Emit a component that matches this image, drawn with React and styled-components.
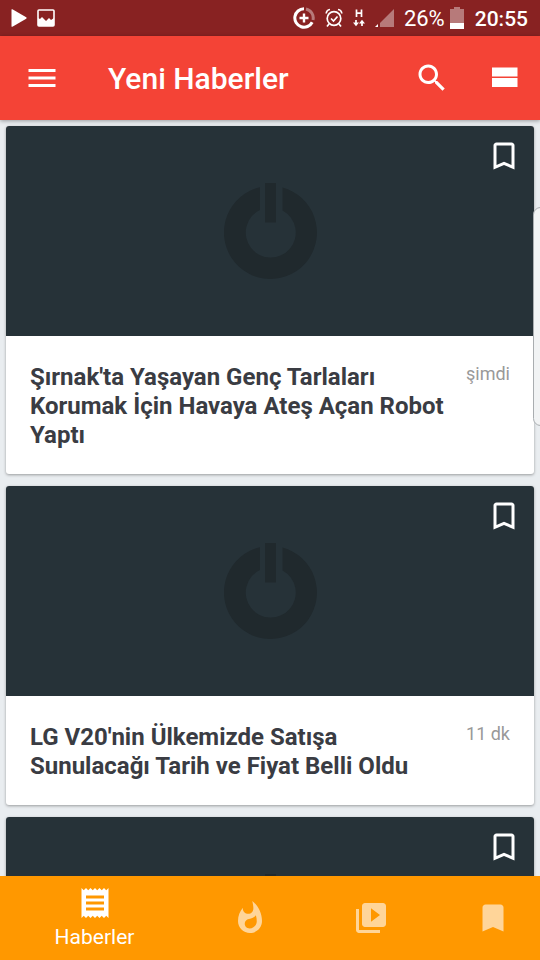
import React from "react";
import styled, { createGlobalStyle } from "styled-components";

const GlobalStyle = createGlobalStyle`
  * {
    box-sizing: border-box;
  }
  body {
    margin: 0;
    background: #e9edf0;
    font-family: Roboto, "Noto Sans", sans-serif;
  }
  button {
    padding: 0;
    border: 0;
    background: none;
    color: inherit;
    font: inherit;
    cursor: pointer;
  }
`;

const icons = {
  menu: "M3 18h18v-2H3v2zm0-5h18v-2H3v2zm0-7v2h18V6H3z",
  search:
    "M15.5 14h-.79l-.28-.27C15.41 12.59 16 11.11 16 9.5 16 5.91 13.09 3 9.5 3S3 5.91 3 9.5 5.91 16 9.5 16c1.61 0 3.09-.59 4.23-1.57l.27.28v.79l5 4.99L20.49 19l-4.99-5zm-6 0C7.01 14 5 11.99 5 9.5S7.01 5 9.5 5 14 7.01 14 9.5 11.99 14 9.5 14z",
  stream: "M4 18h17v-6H4v6zM4 5v6h17V5H4z",
  bookmarkBorder:
    "M17 3H7c-1.1 0-1.99.9-1.99 2L5 21l7-3 7 3V5c0-1.1-.9-2-2-2zm0 15l-5-2.18L7 18V5h10v13z",
  bookmark: "M17 3H7c-1.1 0-1.99.9-1.99 2L5 21l7-3 7 3V5c0-1.1-.9-2-2-2z",
  receipt:
    "M18 17H6v-2h12v2zm0-4H6v-2h12v2zm0-4H6V7h12v2zM3 22l1.5-1.5L6 22l1.5-1.5L9 22l1.5-1.5L12 22l1.5-1.5L15 22l1.5-1.5L18 22l1.5-1.5L21 22V2l-1.5 1.5L18 2l-1.5 1.5L15 2l-1.5 1.5L12 2l-1.5 1.5L9 2 7.5 3.5 6 2 4.5 3.5 3 2v20z",
  hot: "M13.5.67s.74 2.65.74 4.8c0 2.06-1.35 3.73-3.41 3.73-2.07 0-3.63-1.67-3.63-3.73l.03-.36C5.21 7.51 4 10.62 4 14c0 4.42 3.58 8 8 8s8-3.58 8-8C20 8.61 17.41 3.8 13.5.67zM11.71 19c-1.78 0-3.22-1.4-3.22-3.14 0-1.62 1.05-2.76 2.81-3.12 1.77-.36 3.6-1.21 4.62-2.58.39 1.29.59 2.65.59 4.04 0 2.65-2.15 4.8-4.8 4.8z",
  videos:
    "M4 6H2v14c0 1.1.9 2 2 2h14v-2H4V6zm16-4H8c-1.1 0-2 .9-2 2v12c0 1.1.9 2 2 2h12c1.1 0 2-.9 2-2V4c0-1.1-.9-2-2-2zm-8 12.5v-9l6 4.5-6 4.5z",
};

const news = [
  {
    id: 1,
    title: "Şırnak'ta Yaşayan Genç Tarlaları Korumak İçin Havaya Ateş Açan Robot Yaptı",
    time: "şimdi",
  },
  {
    id: 2,
    title: "LG V20'nin Ülkemizde Satışa Sunulacağı Tarih ve Fiyat Belli Oldu",
    time: "11 dk",
  },
  { id: 3 },
];

const tabs = [
  { icon: "receipt", name: "Haberler", active: true },
  { icon: "hot", name: "Popüler" },
  { icon: "videos", name: "Videolar" },
  { icon: "bookmark", name: "Kaydedilenler" },
];

const Icon = ({ name }) => (
  <IconSvg viewBox="0 0 24 24" aria-hidden="true">
    <path d={icons[name]} />
  </IconSvg>
);

const StatusBar = () => (
  <StatusWrapper>
    <StatusGroup $gap={10}>
      <svg width="16" height="18" viewBox="0 0 16 18" fill="#fff">
        <path d="M.5.8v16.4q0 1 .9.5l13.8-8q.8-.7 0-1.4L1.4.3Q.5-.2.5.8z" />
      </svg>
      <svg width="18" height="18" viewBox="0 0 18 18">
        <rect x="1" y="1" width="16" height="16" rx="1" fill="none" stroke="#fff" strokeWidth="1.6" />
        <path d="M1 9l2 1 2-2 3 3 1 1 3-3 2 2 3-2v8H1z" fill="#fff" />
      </svg>
    </StatusGroup>
    <StatusGroup $gap={10}>
      <svg width="22" height="22" viewBox="0 0 22 22" fill="none" stroke="#fff">
        <path d="M11 1.8A9.2 9.2 0 1 0 19.2 15.2" strokeWidth="3" />
        <path d="M13 2A9.2 9.2 0 0 1 20 13" strokeWidth="3" opacity=".4" />
        <path d="M11 6.5v9M6.5 11h9" strokeWidth="2.4" />
      </svg>
      <svg width="18" height="20" viewBox="0 0 18 20" fill="none" stroke="#fff" strokeWidth="1.7">
        <circle cx="9" cy="10.5" r="6.8" />
        <path d="M1.2 5.5Q1.5 2 5 1.5M16.8 5.5Q16.5 2 13 1.5M4 16l-2 2.5M14 16l2 2.5M6 10.5l2.5 2.5 4-4.5" />
      </svg>
      <svg width="12" height="20" viewBox="0 0 12 20" fill="none" stroke="#fff" strokeWidth="1.7">
        <path d="M3.5 1.500v7.500M8.500 1.500v7.500M3.500 5.200h5M3 12v4M9 18v-4" />
        <path d="M0 14.500h6L3 18.300zM6 15.500h6L9 11.700z" fill="#fff" stroke="none" />
      </svg>
      <svg width="19" height="20" viewBox="0 0 19 20" fill="#fff">
        <path d="M19 1v18H5v-4z" opacity=".4" />
        <path d="M3 16v3H0z" />
      </svg>
      <StatusGroup $gap={5}>
        <StatusText>26%</StatusText>
        <svg width="15" height="22" viewBox="0 0 15 22" fill="#fff">
          <path d="M4 0h6v2h4v14H0V2h4z" opacity=".4" />
          <path d="M0 16h14v6H0z" />
        </svg>
      </StatusGroup>
      <StatusText $bold>20:55</StatusText>
    </StatusGroup>
  </StatusWrapper>
);

const NewsCard = ({ title, time }) => (
  <Card>
    <Cover>
      <svg width="93" height="96" viewBox="0 0 93 96" fill="#20292d" aria-hidden="true">
        <path d="M36 4.2A46.5 46.5 0 1 0 58.5 4.6V27.500A25 25 0 1 1 36 27z" />
        <path d="M41 0h11v39.500H41z" />
      </svg>
      <SaveButton aria-label="Kaydet">
        <Icon name="bookmarkBorder" />
      </SaveButton>
    </Cover>
    {title && (
      <CardBody>
        <CardTitle>{title}</CardTitle>
        <Time>{time}</Time>
      </CardBody>
    )}
  </Card>
);

export default function App() {
  return (
    <Screen>
      <GlobalStyle />
      <StatusBar />
      <Toolbar>
        <IconButton aria-label="Menü">
          <Icon name="menu" />
        </IconButton>
        <PageTitle>Yeni Haberler</PageTitle>
        <IconButton aria-label="Ara">
          <Icon name="search" />
        </IconButton>
        <IconButton aria-label="Görünüm">
          <Icon name="stream" />
        </IconButton>
      </Toolbar>
      <NewsList>
        {news.map((item) => (
          <NewsCard key={item.id} title={item.title} time={item.time} />
        ))}
      </NewsList>
      <BottomNav>
        {tabs.map((tab) => (
          <Tab key={tab.icon} $active={tab.active} aria-label={tab.name}>
            <Icon name={tab.icon} />
            {tab.active && <span>{tab.name}</span>}
          </Tab>
        ))}
      </BottomNav>
      <EdgeHandle />
    </Screen>
  );
}

const Screen = styled.div`
  display: flex;
  flex-direction: column;
  height: 100vh;
`;

const IconSvg = styled.svg`
  display: block;
  width: 36px;
  height: 36px;
  fill: currentColor;
`;

const StatusWrapper = styled.div`
  display: flex;
  flex: none;
  align-items: center;
  justify-content: space-between;
  height: 36px;
  padding: 0 12px 0 11px;
  background: #882222;
  color: #fff;
`;

const StatusGroup = styled.div`
  display: flex;
  align-items: center;
  gap: ${(props) => props.$gap}px;
`;

const StatusText = styled.span`
  padding-top: 2px;
  font-size: ${(props) => (props.$bold ? 21 : 22)}px;
  font-weight: ${(props) => (props.$bold ? 500 : 400)};
  line-height: 32px;
`;

const Toolbar = styled.header`
  position: relative;
  z-index: 1;
  display: flex;
  flex: none;
  align-items: center;
  gap: 36px;
  height: 84px;
  padding: 0 18px 0 24px;
  background: #f44336;
  color: #fff;
  box-shadow: 0 1px 4px rgba(0, 0, 0, 0.35);
`;

const IconButton = styled.button`
  flex: none;
`;

const PageTitle = styled.h1`
  flex: 1;
  margin: 0;
  padding: 2px 0 0 12px;
  font-size: 30px;
  font-weight: 500;
  line-height: 36px;
`;

const NewsList = styled.main`
  display: flex;
  flex: 1;
  flex-direction: column;
  gap: 12px;
  min-height: 0;
  padding: 6px;
  overflow-y: auto;
  scrollbar-width: none;
`;

const Card = styled.article`
  flex: none;
  overflow: hidden;
  border-radius: 3px;
  background: #fff;
  box-shadow: 0 1px 3px rgba(0, 0, 0, 0.35);
`;

const Cover = styled.div`
  position: relative;
  display: flex;
  align-items: center;
  justify-content: center;
  height: 210px;
  background: #263238;
`;

const SaveButton = styled.button`
  position: absolute;
  top: 12px;
  right: 12px;
  color: #fff;
`;

const CardBody = styled.div`
  display: flex;
  gap: 12px;
  padding: 27px 24px 24px;
`;

const CardTitle = styled.h2`
  flex: 1;
  margin: 0;
  color: #3a3c43;
  font-size: 24px;
  font-weight: 700;
  line-height: 29px;
`;

const Time = styled.time`
  color: #999;
  font-size: 18px;
  line-height: 22px;
`;

const BottomNav = styled.nav`
  position: relative;
  z-index: 1;
  display: flex;
  flex: none;
  height: 84px;
  overflow: hidden;
  background: #ff9800;
  color: #fff;
`;

const Tab = styled.button`
  display: flex;
  flex: 0 0 ${(props) => (props.$active ? "35%" : "22.5%")};
  flex-direction: column;
  align-items: center;
  justify-content: center;
  padding-top: ${(props) => (props.$active ? 2 : 0)}px;
  font-size: 21px;
  line-height: 32px;

  svg {
    opacity: ${(props) => (props.$active ? 1 : 0.6)};
  }
`;

const EdgeHandle = styled.div`
  position: fixed;
  top: 207px;
  right: -8px;
  z-index: 2;
  width: 15px;
  height: 219px;
  border: 1px solid #a9adb0;
  border-radius: 8px;
  background: #f1f3f4;
`;
